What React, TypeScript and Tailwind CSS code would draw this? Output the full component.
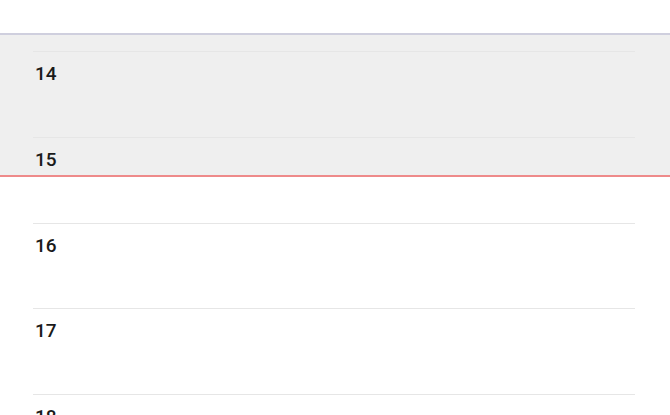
import React from 'react'

const hours = [14, 15, 16, 17, 18, 19]

export default function App() {
    return (
        <div className='relative h-[415px] w-[670px] overflow-hidden bg-white' style={{ fontFamily: 'Roboto, "Liberation Sans", sans-serif' }}>
            <div className='h-[35px] border-b-2 border-[#cfcfde] bg-white'></div>

            <div className='relative pt-[16px]'>
                {/* past time shading + now indicator */}
                <div className='absolute top-0 left-0 right-0 h-[140px] bg-[#efefef]'></div>
                <div className='absolute top-[140px] left-0 right-0 h-[2px] bg-[#ee8a8a]'></div>

                <div className='relative ml-[33px] w-[602px]'>
                    {hours.map((h) => (
                        <div key={h} className='h-[85.75px] border-t border-[#e6e6e6] pt-[10px] pl-[2px]'>
                            <span className='text-[19px] leading-[24px] font-medium text-[#1a1a1a]'>{h}</span>
                        </div>
                    ))}
                </div>
            </div>
        </div>
    )
}
